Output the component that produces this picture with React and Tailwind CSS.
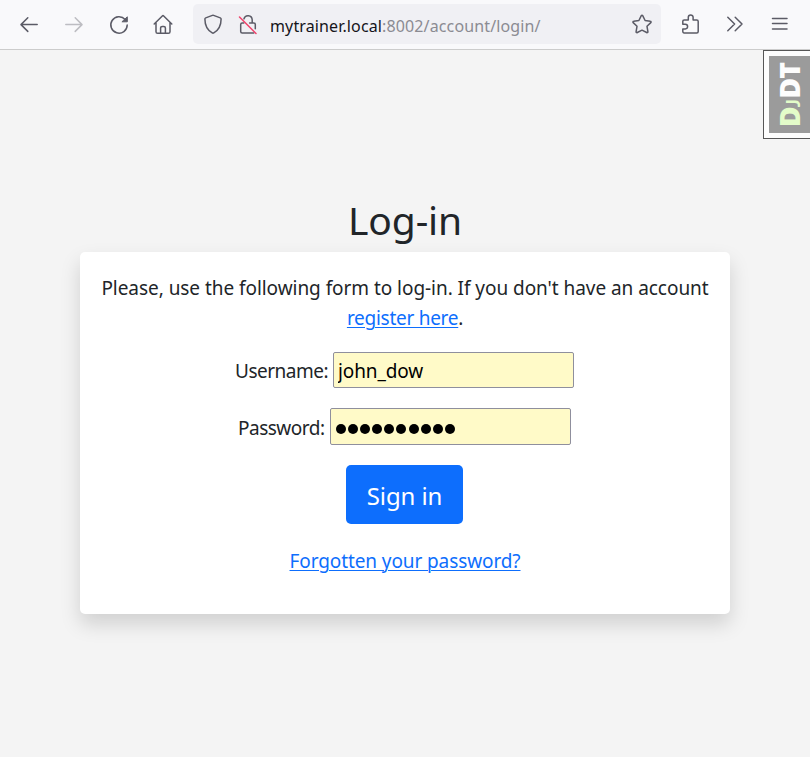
import React from "react";

function Icon({ children, className = "", color = "#5b5b66" }) {
  return (
    <svg
      width="22"
      height="22"
      viewBox="0 0 22 22"
      fill="none"
      stroke={color}
      strokeWidth="1.5"
      strokeLinecap="round"
      strokeLinejoin="round"
      className={"shrink-0 " + className}
    >
      {children}
    </svg>
  );
}

function Toolbar() {
  return (
    <header className="flex h-[50px] items-start border-b border-[#cccccc] bg-[#f9f9fb]">
      <Icon className="mt-[14px] ml-[18px]">
        <path d="M19.2 10.6H3M9.8 3.8 3 10.6l6.800 6.800" />
      </Icon>
      <Icon className="mt-[14px] ml-[23px]" color="#bdbdc2">
        <path d="M2.800 10.600H19M12.200 3.800 19 10.600l-6.800 6.800" />
      </Icon>
      <Icon className="mt-[14px] ml-[23px]">
        <path d="M17.200 5.600A8.200 8.200 0 1 0 19.200 11" />
        <path d="M19.300 3.200v4.600h-5z" fill="#5b5b66" strokeWidth="1" strokeLinejoin="miter" />
      </Icon>
      <Icon className="mt-[14px] ml-[22px]">
        <path d="M2.200 10 10.300 2a1 1 0 0 1 1.400 0l8.100 8M4 8.700v9a1.600 1.600 0 0 0 1.600 1.600h10.800a1.600 1.600 0 0 0 1.600-1.600v-9M8.600 19v-5a1.600 1.600 0 0 1 1.600-1.600h1.600a1.600 1.600 0 0 1 1.600 1.600v5" />
      </Icon>
      <div className="mt-1 ml-[19px] flex h-10 w-[468px] items-start rounded-[5px] bg-[#f0f0f4]">
        <Icon className="mt-[9px] ml-[9px]">
          <path d="M11 2.300a1.500 1.500 0 0 1 .6.100l6.700 2.500a1.200 1.200 0 0 1 .8 1.100c0 4.600-1.200 10.400-7.300 13.900a1.600 1.600 0 0 1-1.600 0C4.100 16.400 2.900 10.600 2.900 6a1.200 1.200 0 0 1 .8-1.100l6.700-2.500a1.500 1.500 0 0 1 .6-.1z" />
        </Icon>
        <Icon className="mt-[9px] ml-[13px]">
          <path d="M7 5.800a4.200 4.200 0 0 1 8.200.900v3.300M6.800 10H5.200a1.500 1.500 0 0 0-1.500 1.500v6.900a1.500 1.500 0 0 0 1.500 1.500h11.600M12.600 10h4.200a1.500 1.500 0 0 1 1.500 1.500v4.200" />
          <path d="M2.500 4l16.500 16.500" stroke="#f0406a" />
        </Icon>
        <div className="mt-[9px] ml-[11px] w-[359px] text-[16px] leading-[26px] tracking-[0.130px] whitespace-nowrap text-[#8b8b92]">
          <span className="text-[#15141a]">mytrainer.local</span>:8002/account/login/
        </div>
        <Icon className="mt-[9px] ml-[2px]">
          <path d="M10.300 2.600a.8.8 0 0 1 1.400 0l2.400 4.900 5.200.7a.8.8 0 0 1 .5 1.400l-3.800 3.700.9 5.300a.8.8 0 0 1-1.200.9L11 17.200l-4.700 2.300a.8.8 0 0 1-1.200-.9l.9-5.300-3.800-3.700a.8.8 0 0 1 .5-1.400l5.200-.7z" />
        </Icon>
      </div>
      <Icon className="mt-[13px] ml-[19px]">
        <path d="M4 19.900h12.700a1.500 1.500 0 0 0 1.500-1.500V8.400a1.500 1.500 0 0 0-1.500-1.500h-3.600V4.300a2.400 2.400 0 0 0-4.800 0v2.600H4.200A1.400 1.400 0 0 0 2.800 8.300v3h2.500a2.300 2.300 0 0 1 0 4.600H2.800v2.700A1.300 1.300 0 0 0 4 19.900z" />
      </Icon>
      <Icon className="mt-[13px] ml-[23px]">
        <path d="M2.800 4.200l6.800 6.800-6.800 6.800M10.200 4.200l6.800 6.800-6.800 6.800" />
      </Icon>
      <Icon className="mt-[13px] ml-[23px]">
        <path d="M2.500 5.500h14.500M2.500 10.600h14.500M2.500 16h14.500" />
      </Icon>
    </header>
  );
}

function DebugHandle() {
  return (
    <div className="absolute top-[50px] right-0 h-[89px] w-[47px] border border-r-0 border-[#565656] bg-[#fdfdfd] pt-[5px] pl-[5px]">
      <div className="flex h-[77px] w-[41px] items-center justify-center bg-[#9b9b9b] pl-[4px]">
        <div className="-rotate-90 font-['Open_Sans'] text-[28.500px] leading-[41px] font-extrabold tracking-[-0.800px] whitespace-nowrap text-[#fdfdfd]">
          <span className="text-[#e3fcc9]">
            D<span className="mr-[1px] font-['Lato'] text-[19px] font-bold">J</span>
          </span>
          DT
        </div>
      </div>
    </div>
  );
}

export default function App() {
  return (
    <div className="relative h-[757px] w-[810px] overflow-hidden bg-[#f4f4f4] font-['Noto_Sans','Open_Sans',sans-serif] text-[19px] text-[#212529]">
      <Toolbar />
      <DebugHandle />
      <main className="flex flex-col items-center pt-[140px]">
        <h1 className="h-[62px] text-[39px] leading-[60px] tracking-[-0.150px]">Log-in</h1>
        <form className="flex h-[362px] w-[650px] flex-col items-center rounded-[5px] bg-white pt-[21px] shadow-[0_10px_20px_rgba(0,0,0,0.15)]">
          <p className="text-center leading-[30px] tracking-[-0.270px] whitespace-nowrap">
            <span className="tracking-[-0.050px]">Please, use the following form to log-in. If you don't have an account</span>
            <br />
            <a className="text-[#0d6efd] underline decoration-1 underline-offset-2">register here</a>.
          </p>
          <label className="mt-[19px] mr-[1px] flex h-9 w-[339px] items-center justify-between tracking-[-0.500px]">
            <span className="pt-[2px]">Username:</span>
            <input
              type="text"
              defaultValue="john_dow"
              className="h-9 w-[241px] rounded-[2px] border border-[#8f8f9d] bg-[#fffac8] px-[4px] pt-[2px] tracking-[-0.120px] text-black"
            />
          </label>
          <label className="mt-[20px] mr-[1px] flex h-[37px] w-[333px] items-center justify-between tracking-[-0.500px]">
            <span className="pt-1">Password:</span>
            <span className="flex h-[37px] w-[241px] items-center gap-[2.100px] rounded-[2px] border border-[#8f8f9d] bg-[#fffac8] pt-[5px] pl-[5px]">
              {Array.from({ length: 10 }, (_, i) => (
                <span key={i} className="h-[10px] w-[10px] rounded-full bg-black" />
              ))}
            </span>
          </label>
          <button
            type="button"
            className="mt-[20px] mr-[1px] h-[59px] w-[117px] rounded-[5px] bg-[#0d6efd] pt-[3px] text-[24px] tracking-[-0.100px] text-white"
          >
            Sign in
          </button>
          <a className="mt-[22px] leading-[30px] tracking-[-0.100px] text-[#0d6efd] underline decoration-1 underline-offset-2">
            Forgotten your password?
          </a>
        </form>
      </main>
    </div>
  );
}
